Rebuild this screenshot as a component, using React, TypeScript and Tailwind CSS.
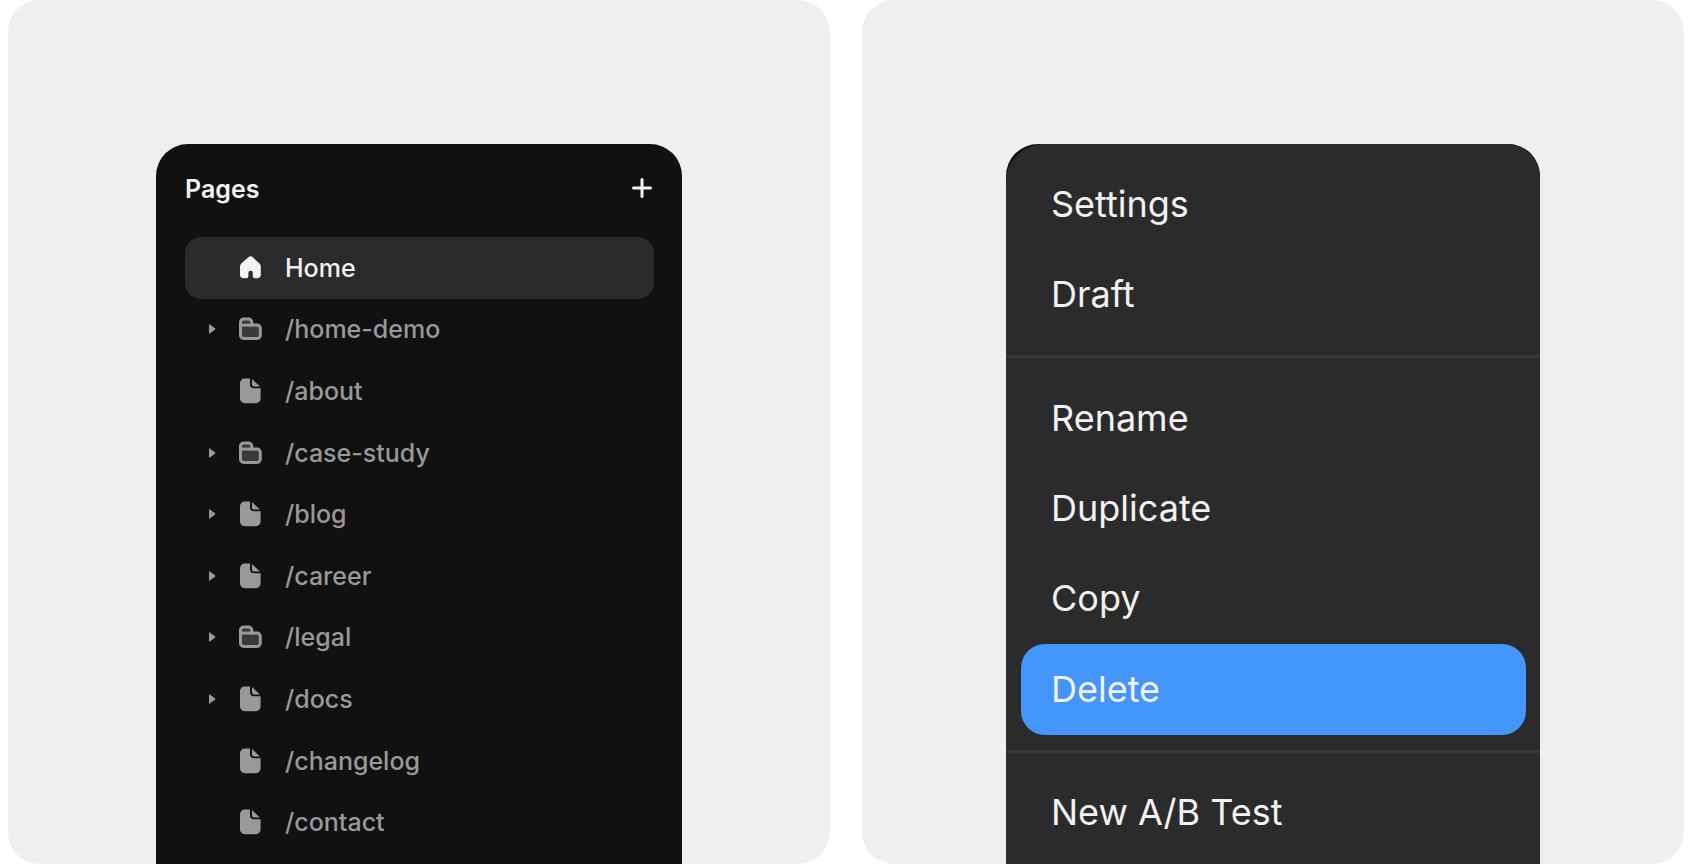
import clsx from "clsx"

type PageKind = "home" | "folder" | "file"

interface PageItem {
  label: string
  kind: PageKind
  expandable?: boolean
  active?: boolean
}

const pages: PageItem[] = [
  { label: "Home", kind: "home", active: true },
  { label: "/home-demo", kind: "folder", expandable: true },
  { label: "/about", kind: "file" },
  { label: "/case-study", kind: "folder", expandable: true },
  { label: "/blog", kind: "file", expandable: true },
  { label: "/career", kind: "file", expandable: true },
  { label: "/legal", kind: "folder", expandable: true },
  { label: "/docs", kind: "file", expandable: true },
  { label: "/changelog", kind: "file" },
  { label: "/contact", kind: "file" },
]

const menuGroups = [
  ["Settings", "Draft"],
  ["Rename", "Duplicate", "Copy", "Delete"],
  ["New A/B Test"],
]

function HomeIcon() {
  return (
    <svg viewBox="0 0 24 26" className="h-[26px] w-6" fill="currentColor" aria-hidden="true">
      <path d="M9.4 2.3a3.2 3.2 0 0 1 4.4 0l6.4 6a4.6 4.6 0 0 1 1.6 3.4v7.8a3.8 3.8 0 0 1-3.8 3.8h-2.2a2 2 0 0 1-2-2v-3.4a2.2 2.2 0 0 0-4.4 0v3.4a2 2 0 0 1-2 2H4.8A3.8 3.8 0 0 1 1 19.5v-7.8a4.6 4.6 0 0 1 1.6-3.4z" />
    </svg>
  )
}

function FolderIcon() {
  return (
    <svg viewBox="0 0 24 26" className="h-[26px] w-6" fill="none" aria-hidden="true">
      <path
        d="M1.5 9.1V6.2a3.1 3.1 0 0 1 3.1-3.1h5.2a3 3 0 0 1 3 3v3h5.4a3.1 3.1 0 0 1 3.1 3.1v7.1a3.1 3.1 0 0 1-3.1 3.1H4.6a3.1 3.1 0 0 1-3.1-3.1z"
        fill="#3a3a3a"
        stroke="currentColor"
        strokeWidth="3"
        strokeLinejoin="round"
      />
      <path d="M2 9.1h12" stroke="currentColor" strokeWidth="3" />
    </svg>
  )
}

function FileIcon() {
  return (
    <svg viewBox="0 0 24 26" className="h-[26px] w-6" fill="currentColor" aria-hidden="true">
      <path d="M5.4.6H11v5.6a4 4 0 0 0 4 4h6.6v10.4a4.6 4.6 0 0 1-4.6 4.6H5.6A4.6 4.6 0 0 1 1 20.6V5A4.4 4.4 0 0 1 5.4.6z" />
      <path d="M13 1l8 7.6h-6a2 2 0 0 1-2-2z" />
    </svg>
  )
}

function PageIcon({ kind }: { kind: PageKind }) {
  if (kind === "home") return <HomeIcon />
  if (kind === "folder") return <FolderIcon />
  return <FileIcon />
}

function PageRow({ page }: { page: PageItem }) {
  return (
    <li className="flex min-h-14 flex-1">
      <a
        href="#"
        aria-current={page.active ? "page" : undefined}
        className={clsx(
          "flex flex-1 items-center rounded-2xl pl-6",
          page.active ? "bg-[#2b2b2b] text-[#f2f2f2]" : "text-[#999999]"
        )}
      >
        <span className="mr-[23px] flex w-[7px]">
          {page.expandable && (
            <svg viewBox="0 0 7 10" className="h-2.5 w-[7px]" fill="currentColor" aria-hidden="true">
              <path d="M0 .8Q0 0 .8.4L6 4.3q.8.7 0 1.4L.8 9.6Q0 10 0 9.2z" />
            </svg>
          )}
        </span>
        <PageIcon kind={page.kind} />
        <span className="ml-[22px]">{page.label}</span>
      </a>
    </li>
  )
}

function PagesPanel() {
  return (
    <nav
      aria-label="Pages"
      className="flex w-full flex-col rounded-t-[32px] bg-[#111111] pr-7 pb-[11px] pl-[29px] text-[25px] leading-8 font-medium"
    >
      <header className="flex h-[93px] items-center justify-between pb-1">
        <h2 className="font-semibold text-[#f2f2f2]">Pages</h2>
        <button type="button" aria-label="Add page" className="mr-0.5 pb-0.5 text-[#f2f2f2]">
          <svg viewBox="0 0 20 20" className="size-5" stroke="currentColor" strokeWidth="3" strokeLinecap="round" aria-hidden="true">
            <path d="M10 1.5v17M1.5 10h17" />
          </svg>
        </button>
      </header>
      <ul className="flex flex-1 flex-col">
        {pages.map((page) => (
          <PageRow key={page.label} page={page} />
        ))}
      </ul>
    </nav>
  )
}

function ContextMenu() {
  return (
    <div className="flex w-full rounded-t-[32px] bg-[#111111]">
      <div
        role="menu"
        className="flex flex-1 flex-col rounded-tl-[38px] rounded-tr-[34px] bg-[#2b2b2b] pt-[15px] pb-1.5 text-[36px] leading-[44px] text-[#f2f2f2]"
      >
        {menuGroups.map((group, i) => (
          <div key={i} role="group" className="contents">
            {i > 0 && <hr className="my-[15px] border-t-3 border-[#383838]" />}
            {group.map((label) => (
              <button
                key={label}
                type="button"
                role="menuitem"
                className={clsx(
                  "mr-3.5 ml-[15px] min-h-16 flex-1 rounded-3xl pb-px pl-[30px] text-left",
                  label === "Delete" && "bg-[#4496fa]"
                )}
              >
                {label}
              </button>
            ))}
          </div>
        ))}
      </div>
    </div>
  )
}

export default function App() {
  return (
    <main className="grid min-h-screen grid-cols-2 gap-8 bg-white px-2 font-['Inter',sans-serif]">
      <section className="flex overflow-hidden rounded-[32px] bg-[#efefef] px-[148px] pt-36">
        <PagesPanel />
      </section>
      <section className="flex overflow-hidden rounded-[32px] bg-[#efefef] px-36 pt-36">
        <ContextMenu />
      </section>
    </main>
  )
}
